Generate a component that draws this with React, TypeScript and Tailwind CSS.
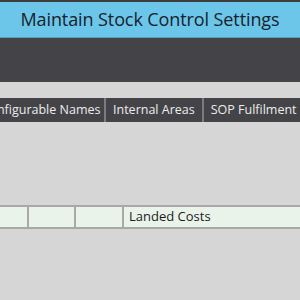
export default function App() {
  const tabs = ["Configurable Names", "Internal Areas", "SOP Fulfilment", "Pricing"];

  return (
    <div className="w-[300px] h-[300px] overflow-hidden bg-[#d6d6d6] font-['Open_Sans',sans-serif]">
      {/* title */}
      <div className="h-[2px] bg-[#3d3d3f]" />
      <div className="h-[36px] bg-[#6bc6e9] border-b border-[#5a9fba] flex items-center justify-center">
        <span className="text-[18px] text-[#17222c] tracking-[-0.1px]">Maintain Stock Control Settings</span>
      </div>
      <div className="h-[44px] bg-[#444448]" />

      {/* tabs */}
      <div className="mt-[16px] h-[24px] bg-[#444448] flex whitespace-nowrap overflow-hidden">
        <div className="ml-[-22px] w-[128px] shrink-0 border-r-[2px] border-[#7c7c80] flex items-center justify-center text-[12.5px] text-[#ececec]">
          {tabs[0]}
        </div>
        {tabs.slice(1).map((t) => (
          <div
            key={t}
            className="shrink-0 px-[7px] border-r-[2px] border-[#7c7c80] flex items-center text-[12.5px] text-[#ececec]"
          >
            {t}
          </div>
        ))}
      </div>

      {/* grid row */}
      <div className="mt-[83px] h-[24px] flex gap-[2px] border-y-[2px] border-[#a8a8a8] bg-[#a8a8a8]">
        <div className="w-[27px] bg-[#e9f3e9]" />
        <div className="w-[45px] bg-[#e9f3e9]" />
        <div className="w-[46px] bg-[#e9f3e9]" />
        <div className="flex-1 bg-[#e9f3e9] flex items-center pl-[5px] text-[13px] text-[#1c1c1c]">
          Landed Costs
        </div>
      </div>
    </div>
  );
}
